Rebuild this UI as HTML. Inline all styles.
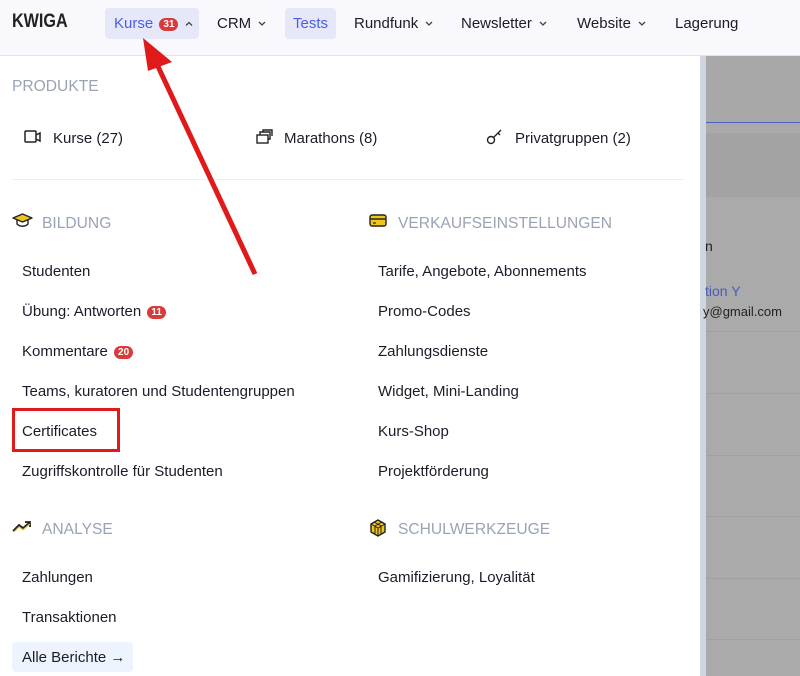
<!DOCTYPE html>
<html><head><meta charset="utf-8"><style>
*{margin:0;padding:0;box-sizing:border-box}
body{width:800px;height:676px;overflow:hidden;font-family:"Liberation Sans",sans-serif;background:#fff;position:relative;color:#1a1d28;font-size:15px}
.nav{position:absolute;left:0;top:0;width:800px;height:56px;background:#f8f8fd;border-bottom:1px solid #e4e4ea}
.nav span.n{position:absolute;top:15px;font-size:15px;line-height:18px}
.pill{position:absolute;top:8px;height:31px;background:#e6e8fa;border-radius:4px}
.logo{left:12px;font-weight:bold;font-size:19px!important;transform:scaleX(.85);transform-origin:left;top:13px!important;color:#222}
.badge{display:inline-block;background:#d93a3a;color:#fff;font-size:10px;font-weight:bold;border-radius:7px;padding:0 4px;line-height:13px;vertical-align:1px;margin-left:2px}
.chev{display:inline-block;vertical-align:2px;margin-left:7px}
.right{position:absolute;left:706px;top:56px;width:94px;height:620px;background:#aaa}
.scroll{position:absolute;left:700px;top:56px;width:6px;height:620px;background:#cfd6df}
.t{position:absolute;white-space:nowrap}
.h{position:absolute;font-size:15.6px;color:#9aa3b5;white-space:nowrap}
.it{position:absolute;white-space:nowrap;font-size:15px}
.hl{position:absolute;left:706px;width:94px;height:1px;background:#a0a0a0}
</style></head><body>
<div class="nav">
<div class="pill" style="left:105px;width:94px"></div>
<div class="pill" style="left:285px;width:51px"></div>
<span class="n logo">KWIGA</span>
<span class="n" style="left:114px;color:#4a5ee8">Kurse <span class="badge">31</span><svg class="chev" width="8" height="5" viewBox="0 0 8 5"><path d="M1 4.5L4 1.5 7 4.5" fill="none" stroke="#444" stroke-width="1.3"/></svg></span>
<span class="n" style="left:217px">CRM<svg class="chev" width="8" height="5" viewBox="0 0 8 5"><path d="M1 1L4 4 7 1" fill="none" stroke="#444" stroke-width="1.3"/></svg></span>
<span class="n" style="left:293px;color:#4a5ee8">Tests</span>
<span class="n" style="left:354px">Rundfunk<svg class="chev" width="8" height="5" viewBox="0 0 8 5"><path d="M1 1L4 4 7 1" fill="none" stroke="#444" stroke-width="1.3"/></svg></span>
<span class="n" style="left:461px">Newsletter<svg class="chev" width="8" height="5" viewBox="0 0 8 5"><path d="M1 1L4 4 7 1" fill="none" stroke="#444" stroke-width="1.3"/></svg></span>
<span class="n" style="left:577px">Website<svg class="chev" width="8" height="5" viewBox="0 0 8 5"><path d="M1 1L4 4 7 1" fill="none" stroke="#444" stroke-width="1.3"/></svg></span>
<span class="n" style="left:675px">Lagerung</span>
</div>
<div class="scroll"></div>
<div class="right">
<div style="position:absolute;left:0;top:0;width:94px;height:66px;background:#a8a8a8"></div>
<div style="position:absolute;left:0;top:66px;width:94px;height:1px;background:#5060c0"></div>
<div style="position:absolute;left:0;top:77px;width:94px;height:64px;background:#a3a3a3"></div>
<div class="t" style="left:-1px;top:182px;color:#222;font-size:14px">n</div>
<div class="t" style="left:-1px;top:227px;color:#4a5ac0;font-size:14px">tion Y</div>
<div class="t" style="left:-3px;top:248px;font-size:13px;color:#222">y@gmail.com</div>
</div>
<div class="hl" style="top:331px"></div><div class="hl" style="top:393px"></div><div class="hl" style="top:455px"></div><div class="hl" style="top:516px"></div><div class="hl" style="top:578px"></div><div class="hl" style="top:639px"></div>

<div class="h" style="left:12px;top:78px">PRODUKTE</div>
<svg style="position:absolute;left:24px;top:130px" width="18" height="14" viewBox="0 0 18 14"><rect x="1" y="1" width="11" height="11" rx="1" fill="none" stroke="#222" stroke-width="1.5"/><path d="M12 5l4-2v8l-4-2" fill="none" stroke="#222" stroke-width="1.5"/></svg>
<div class="it" style="left:53px;top:130px">Kurse (27)</div>
<svg style="position:absolute;left:256px;top:129px" width="17" height="15" viewBox="0 0 17 15"><rect x="1" y="6" width="11" height="8" fill="none" stroke="#222" stroke-width="1.4"/><path d="M4 6V3h10v7h-2M7 3V1h9v6" fill="none" stroke="#222" stroke-width="1.4"/></svg>
<div class="it" style="left:284px;top:130px">Marathons (8)</div>
<svg style="position:absolute;left:486px;top:129px" width="17" height="16" viewBox="0 0 17 16"><circle cx="5" cy="11" r="3.5" fill="none" stroke="#222" stroke-width="1.4"/><path d="M7.5 8.5L15 1M12 4l2 2" fill="none" stroke="#222" stroke-width="1.4"/></svg>
<div class="it" style="left:515px;top:130px">Privatgruppen (2)</div>
<div style="position:absolute;left:12px;top:179px;width:672px;height:1px;background:#eceef2"></div>

<svg style="position:absolute;left:12px;top:213px" width="21" height="15" viewBox="0 0 21 15"><path d="M10.5 1L20 5l-9.5 4L1 5z" fill="#f0c419" stroke="#222" stroke-width="1.4" stroke-linejoin="round"/><path d="M5 7v4c3 3 8 3 11 0V7" fill="none" stroke="#222" stroke-width="1.4"/></svg>
<div class="h" style="left:42px;top:215px">BILDUNG</div>
<div class="it" style="left:22px;top:263px">Studenten</div>
<div class="it" style="left:22px;top:303px">Übung: Antworten <span class="badge">11</span></div>
<div class="it" style="left:22px;top:343px">Kommentare <span class="badge">20</span></div>
<div class="it" style="left:22px;top:383px">Teams, kuratoren und Studentengruppen</div>
<div class="it" style="left:22px;top:423px">Certificates</div>
<div style="position:absolute;left:12px;top:408px;width:108px;height:44px;border:3px solid #e0191b"></div>
<div class="it" style="left:22px;top:463px">Zugriffskontrolle für Studenten</div>

<svg style="position:absolute;left:12px;top:520px" width="20" height="13" viewBox="0 0 20 13"><path d="M1 11l6-6 4 3 7-6M13 2h5v5" fill="none" stroke="#222" stroke-width="1.8"/><path d="M2 12l5-5 4 3 7-6" fill="none" stroke="#f0c419" stroke-width="1"/></svg>
<div class="h" style="left:42px;top:521px">ANALYSE</div>
<div class="it" style="left:22px;top:569px">Zahlungen</div>
<div class="it" style="left:22px;top:609px">Transaktionen</div>
<div style="position:absolute;left:12px;top:642px;width:121px;height:30px;background:#eef4fd;border-radius:4px"></div>
<div class="it" style="left:22px;top:649px">Alle Berichte →</div>

<svg style="position:absolute;left:369px;top:214px" width="18" height="13" viewBox="0 0 18 13"><rect x="1" y="1" width="16" height="11" rx="2" fill="#f0c419" stroke="#222" stroke-width="1.4"/><path d="M1 5h16" stroke="#222" stroke-width="1.4"/><path d="M4 9h3" stroke="#222" stroke-width="1.2"/></svg>
<div class="h" style="left:398px;top:215px">VERKAUFSEINSTELLUNGEN</div>
<div class="it" style="left:378px;top:263px">Tarife, Angebote, Abonnements</div>
<div class="it" style="left:378px;top:303px">Promo-Codes</div>
<div class="it" style="left:378px;top:343px">Zahlungsdienste</div>
<div class="it" style="left:378px;top:383px">Widget, Mini-Landing</div>
<div class="it" style="left:378px;top:423px">Kurs-Shop</div>
<div class="it" style="left:378px;top:463px">Projektförderung</div>
<svg style="position:absolute;left:369px;top:519px" width="18" height="18" viewBox="0 0 18 18"><path d="M9 1l7 4v8l-7 4-7-4V5z" fill="#f0c419" stroke="#222" stroke-width="1.4" stroke-linejoin="round"/><path d="M2 5l7 4 7-4M9 9v8M5 3l7 4v8M13 3L6 7v8" fill="none" stroke="#222" stroke-width="1"/></svg>
<div class="h" style="left:398px;top:521px">SCHULWERKZEUGE</div>
<div class="it" style="left:378px;top:569px">Gamifizierung, Loyalität</div>

<svg style="position:absolute;left:0;top:0" width="800" height="676"><path d="M255 274L155 60" stroke="#e0191b" stroke-width="5" fill="none"/><path d="M143 38l29 24-24 9z" fill="#e0191b"/></svg>
</body></html>
